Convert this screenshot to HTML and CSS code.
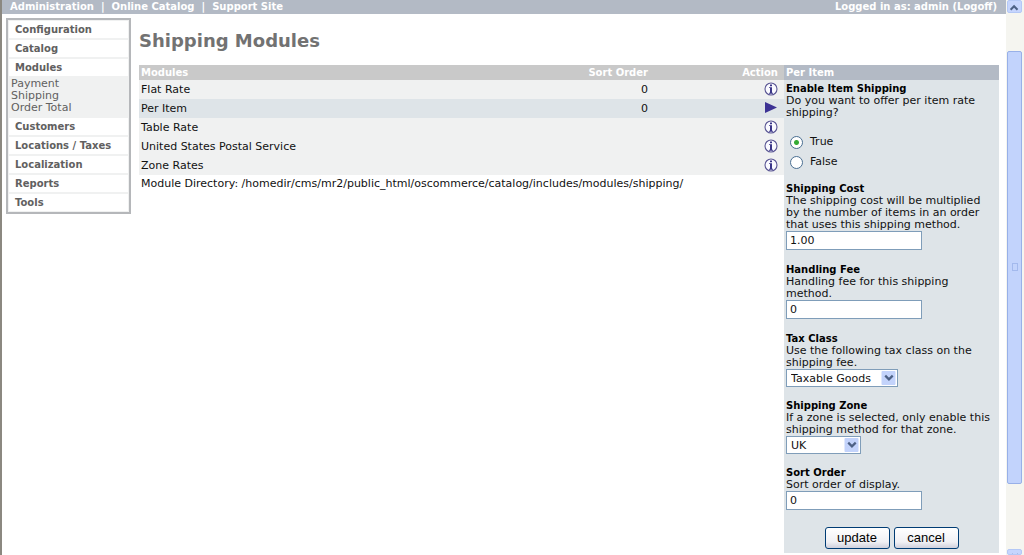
FILE: index.html
```html
<!DOCTYPE html>
<html lang="en">
<head>
<meta charset="UTF-8">
<meta name="viewport" content="width=device-width, initial-scale=1.0">
<title>osCommerce - Shipping Modules</title>
<link rel="stylesheet" href="styles.css">
</head>
<body>
<div class="window">
  <div class="page">
    <header class="header-bar">
      <nav><a href="#">Administration</a><span>|</span><a href="#">Online Catalog</a><span>|</span><a href="#">Support Site</a></nav>
      <div>Logged in as: admin (<a href="#">Logoff</a>)</div>
    </header>

    <div class="columns">
      <nav class="menu">
        <a class="menu-heading" href="#">Configuration</a>
        <a class="menu-heading" href="#">Catalog</a>
        <a class="menu-heading" href="#">Modules</a>
        <div class="submenu">
          <a href="#">Payment</a>
          <a href="#">Shipping</a>
          <a href="#">Order Total</a>
        </div>
        <a class="menu-heading" href="#">Customers</a>
        <a class="menu-heading" href="#">Locations / Taxes</a>
        <a class="menu-heading" href="#">Localization</a>
        <a class="menu-heading" href="#">Reports</a>
        <a class="menu-heading" href="#">Tools</a>
      </nav>

      <main>
        <h1>Shipping Modules</h1>
        <div class="content">
          <div class="listing">
            <table>
              <thead>
                <tr><th>Modules</th><th class="sort">Sort Order</th><th class="action">Action</th></tr>
              </thead>
              <tbody>
                <tr><td>Flat Rate</td><td class="sort">0</td><td class="action"><a href="#" aria-label="Info"><svg class="icon"><use href="#info"/></svg></a></td></tr>
                <tr class="selected"><td>Per Item</td><td class="sort">0</td><td class="action"><svg class="icon"><use href="#arrow"/></svg></td></tr>
                <tr><td>Table Rate</td><td class="sort"></td><td class="action"><a href="#" aria-label="Info"><svg class="icon"><use href="#info"/></svg></a></td></tr>
                <tr><td>United States Postal Service</td><td class="sort"></td><td class="action"><a href="#" aria-label="Info"><svg class="icon"><use href="#info"/></svg></a></td></tr>
                <tr><td>Zone Rates</td><td class="sort"></td><td class="action"><a href="#" aria-label="Info"><svg class="icon"><use href="#info"/></svg></a></td></tr>
              </tbody>
            </table>
            <p class="directory">Module Directory: /homedir/cms/mr2/public_html/oscommerce/catalog/includes/modules/shipping/</p>
          </div>

          <form class="info-box">
            <h2>Per Item</h2>
            <fieldset>
              <legend>Enable Item Shipping</legend>
              <p>Do you want to offer per item rate shipping?</p>
              <div class="radios">
                <label><input type="radio" name="status" checked>True</label>
                <label><input type="radio" name="status">False</label>
              </div>
            </fieldset>
            <div class="field">
              <label for="cost">Shipping Cost</label>
              <p>The shipping cost will be multiplied by the number of items in an order that uses this shipping method.</p>
              <input type="text" id="cost" value="1.00">
            </div>
            <div class="field">
              <label for="handling">Handling Fee</label>
              <p>Handling fee for this shipping method.</p>
              <input type="text" id="handling" value="0">
            </div>
            <div class="field">
              <label for="tax">Tax Class</label>
              <p>Use the following tax class on the shipping fee.</p>
              <div class="select tax">
                <select id="tax"><option>Taxable Goods</option></select>
                <svg><use href="#chevron"/></svg>
              </div>
            </div>
            <div class="field">
              <label for="zone">Shipping Zone</label>
              <p>If a zone is selected, only enable this shipping method for that zone.</p>
              <div class="select zone">
                <select id="zone"><option>UK</option></select>
                <svg><use href="#chevron"/></svg>
              </div>
            </div>
            <div class="field">
              <label for="sort">Sort Order</label>
              <p>Sort order of display.</p>
              <input type="text" id="sort" value="0">
            </div>
            <div class="buttons">
              <button type="button">update</button>
              <button type="button">cancel</button>
            </div>
          </form>
        </div>
      </main>
    </div>
  </div>

  <div class="scrollbar">
    <div class="scroll-button"><svg class="up"><use href="#chevron-plain"/></svg></div>
    <div class="thumb"><span></span></div>
    <div class="scroll-button down"><svg><use href="#chevron-plain"/></svg></div>
  </div>
</div>

<svg class="symbols">
  <symbol id="info" viewBox="0 0 14 14">
    <circle cx="7" cy="7" r="6" fill="#fafaff" stroke="#5a5694" stroke-width="1.1"/>
    <path d="M6 2.5h2v1.8H6zM5 5.2h3v5.6h1v.9H5v-.9h1V6H5z" fill="#3a3588"/>
  </symbol>
  <symbol id="arrow" viewBox="0 0 14 14">
    <path d="M1 1v11l12-5.500z" fill="#3c3294"/>
  </symbol>
  <symbol id="chevron" viewBox="0 0 15 15">
    <rect width="15" height="15" rx="1" fill="#c3d3fb"/>
    <path d="M4 5l4 4 4-4" fill="none" stroke="#4d6185" stroke-width="2.4"/>
  </symbol>
  <symbol id="chevron-plain" viewBox="0 0 15 15">
    <path d="M4 5l4 4 4-4" fill="none" stroke="#4d6185" stroke-width="2.4"/>
  </symbol>
</svg>
</body>
</html>
```

FILE: styles.css
```css
* {
  box-sizing: border-box;
}
body {
  margin: 0;
  background: #fff;
  color: #111;
  font: 11px/12px Verdana, "DejaVu Sans", sans-serif;
}
a {
  color: inherit;
  text-decoration: none;
}
p, h1, h2 {
  margin: 0;
}
.symbols {
  display: none;
}
.window {
  display: flex;
  height: 100vh;
  overflow: hidden;
  border-left: 2px solid #8b8880;
}
.page {
  flex: 1;
}

/* top bar */
.header-bar {
  display: flex;
  justify-content: space-between;
  height: 14px;
  padding: 1px 9px 0 8px;
  background: #b3bac5;
  color: #fff;
  font-size: 10px;
  font-weight: bold;
}
.header-bar span {
  margin: 0 7px;
}
.columns {
  display: flex;
  align-items: flex-start;
  padding: 4px 7px 0 4px;
}

/* left menu */
.menu {
  width: 125px;
  padding: 1px;
  border: 2px solid #b5b7ba;
  background: #f0f1f1;
  color: #616060;
}
.menu a {
  display: block;
}
.menu .menu-heading {
  height: 17px;
  margin-bottom: 2px;
  padding: 3px 6px;
  background: #fff;
  font-size: 10px;
  font-weight: bold;
}
.menu .menu-heading:last-child {
  margin-bottom: 0;
}
.submenu {
  padding: 0 2px 4px;
}

main {
  flex: 1;
  padding-left: 8px;
}
h1 {
  padding: 12px 0 13px;
  color: #727272;
  font-size: 18px;
  line-height: 22px;
}
.content {
  display: flex;
  align-items: flex-start;
}
.listing {
  flex: 3;
}
table {
  width: 100%;
  border-collapse: collapse;
}
th, td {
  padding: 0 2px;
  text-align: left;
}
th {
  height: 15px;
  background: #c9c9c9;
  color: #fff;
  font-size: 10px;
}
td {
  height: 19px;
  background: #f0f1f1;
}
.selected td {
  background: #dee4e8;
}
.sort {
  width: 120px;
  text-align: right;
}
.action {
  width: 134px;
  padding-right: 6px;
  text-align: right;
}
td.action {
  padding-bottom: 1px;
}
.icon {
  display: block;
  width: 14px;
  height: 14px;
  margin-left: auto;
}
.directory {
  padding: 3px 2px;
}

/* edit box on the right */
.info-box {
  flex: 1;
  padding-bottom: 4px;
  background: #dee4e8;
}
.info-box h2 {
  height: 15px;
  padding: 2px;
  background: #b3bac5;
  color: #fff;
  font-size: 10px;
}
fieldset {
  margin: 0;
  padding: 0 2px;
  border: 0;
}
legend {
  padding: 3px 0 0;
}
legend, .field > label {
  display: block;
  color: #000;
  font-size: 10px;
  font-weight: bold;
}
.radios {
  padding: 13px 0 11px 4px;
}
.radios label {
  display: flex;
  align-items: center;
  gap: 7px;
  height: 20px;
}
input[type="radio"] {
  appearance: none;
  width: 13px;
  height: 13px;
  margin: 0;
  border: 1px solid #4a6f92;
  border-radius: 50%;
  background: #fff;
}
input[type="radio"]:checked {
  background: radial-gradient(circle, #35ab35 2px, #fff 3px);
}
.field {
  padding: 0 5px 13px 2px;
}
input[type="text"], select {
  display: block;
  border: 1px solid #7f9db9;
  border-radius: 0;
  background: #fff;
  color: #111;
  font: 11px/15px Verdana, "DejaVu Sans", sans-serif;
}
input[type="text"] {
  width: 136px;
  height: 19px;
  margin-bottom: 1px;
  padding: 1px 3px;
}
.select {
  position: relative;
}
.select select {
  width: 100%;
  height: 18px;
  padding: 0 4px;
  appearance: none;
}
.select svg {
  position: absolute;
  top: 2px;
  right: 2px;
  width: 15px;
  height: 14px;
  pointer-events: none;
}
.tax {
  width: 112px;
}
.zone {
  width: 75px;
}
.buttons {
  display: flex;
  justify-content: center;
  gap: 4px;
  padding-top: 3px;
}
button {
  width: 65px;
  height: 22px;
  padding: 0;
  border: 1px solid #003c74;
  border-radius: 3px;
  background: linear-gradient(#fff, #f0f0f4 70%, #d0d0dc);
  font: 13px/18px "Liberation Sans", Arial, sans-serif;
}

/* window scrollbar */
.scrollbar {
  display: flex;
  flex-direction: column;
  width: 18px;
  padding: 0 2px 0 1px;
  background: #f5f5f0;
}
.scroll-button {
  height: 13px;
  border: 1px solid #b4c8f6;
  border-radius: 2px;
  background: #c6d5fd;
}
.scroll-button svg {
  display: block;
  width: 13px;
  height: 13px;
}
.scroll-button .up {
  transform: rotate(180deg);
}
.scroll-button.down {
  height: 6px;
  overflow: hidden;
}
.thumb {
  display: flex;
  flex: 0 1 78%;
  align-items: center;
  justify-content: center;
  margin: 38px 0 auto;
  border: 1px solid #98b0e8;
  border-radius: 2px;
  background: #c2d3fc;
}
.thumb span {
  width: 6px;
  height: 8px;
  border: 1px solid #a3b9ed;
}
```
